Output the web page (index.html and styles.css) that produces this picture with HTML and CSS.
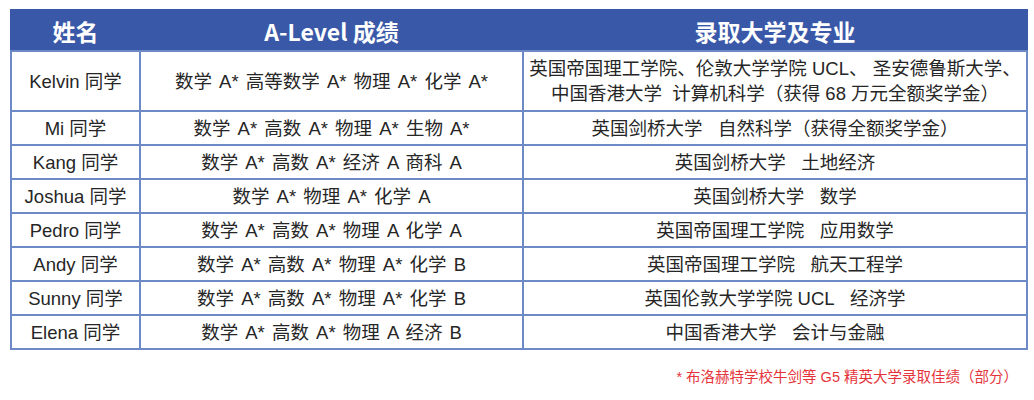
FILE: index.html
```html
<!DOCTYPE html>
<html lang="zh">
<head>
<meta charset="utf-8">
<title>录取佳绩</title>
<link rel="stylesheet" href="styles.css">
</head>
<body>
<div class="page">
  <table class="results">
    <colgroup>
      <col class="c-name">
      <col class="c-grade">
      <col class="c-uni">
    </colgroup>
    <thead>
      <tr><th>姓名</th><th>A-Level 成绩</th><th>录取大学及专业</th></tr>
    </thead>
    <tbody>
      <tr class="tall"><td>Kelvin 同学</td><td class="grade">数学 A* 高等数学 A* 物理 A* 化学 A*</td><td>英国帝国理工学院、伦敦大学学院 UCL、 圣安德鲁斯大学、<br>中国香港大学&nbsp; 计算机科学（获得 68 万元全额奖学金）</td></tr>
      <tr><td>Mi 同学</td><td class="grade">数学 A* 高数 A* 物理 A* 生物 A*</td><td>英国剑桥大学&nbsp;&nbsp; 自然科学（获得全额奖学金）</td></tr>
      <tr><td>Kang 同学</td><td class="grade">数学 A* 高数 A* 经济 A 商科 A</td><td>英国剑桥大学&nbsp;&nbsp; 土地经济</td></tr>
      <tr><td>Joshua 同学</td><td class="grade">数学 A* 物理 A* 化学 A</td><td>英国剑桥大学&nbsp;&nbsp; 数学</td></tr>
      <tr><td>Pedro 同学</td><td class="grade">数学 A* 高数 A* 物理 A 化学 A</td><td>英国帝国理工学院&nbsp;&nbsp; 应用数学</td></tr>
      <tr><td>Andy 同学</td><td class="grade">数学 A* 高数 A* 物理 A* 化学 B</td><td>英国帝国理工学院&nbsp;&nbsp; 航天工程学</td></tr>
      <tr><td>Sunny 同学</td><td class="grade">数学 A* 高数 A* 物理 A* 化学 B</td><td>英国伦敦大学学院 UCL&nbsp;&nbsp; 经济学</td></tr>
      <tr><td>Elena 同学</td><td class="grade">数学 A* 高数 A* 物理 A 经济 B</td><td>中国香港大学&nbsp;&nbsp; 会计与金融</td></tr>
    </tbody>
  </table>
  <p class="note">* 布洛赫特学校牛剑等 G5 精英大学录取佳绩（部分）</p>
</div>
</body>
</html>
```
FILE: styles.css
```css
html, body {
  margin: 0;
  padding: 0;
  background: #ffffff;
}
.page {
  padding: 9px 0 0 10px;
  width: 1016px;
  font-family: "Liberation Sans", "Noto Sans CJK SC", sans-serif;
  color: #262626;
}
.results {
  width: 1016px;
  border-collapse: collapse;
  table-layout: fixed;
  border: 2px solid #6d89c6;
}
.c-name { width: 129px; }
.c-grade { width: 383px; }
.c-uni { width: 504px; }
.results th {
  background: #3a58a8;
  color: #ffffff;
  font-family: "Noto Sans CJK SC", sans-serif;
  font-weight: 700;
  font-size: 23px;
  line-height: 28px;
  height: 39px;
  padding: 0;
  border: 2px solid #3a58a8;
  border-bottom: 2px solid #6d89c6;
  text-align: center;
  vertical-align: middle;
}
.results td {
  border: 2px solid #6d89c6;
  text-align: center;
  vertical-align: middle;
  font-size: 18.5px;
  height: 32px;
  padding: 0;
  line-height: 25px;
  white-space: nowrap;
}
.results td.grade {
  word-spacing: 2px;
}
.results tr.tall td {
  height: 58px;
}
.note {
  margin: 18px 0 0 0;
  text-align: right;
  padding-right: 8px;
  color: #e5333b;
  font-size: 14.5px;
  line-height: 18px;
  font-family: "Liberation Sans", "Noto Sans CJK SC", sans-serif;
}
```
